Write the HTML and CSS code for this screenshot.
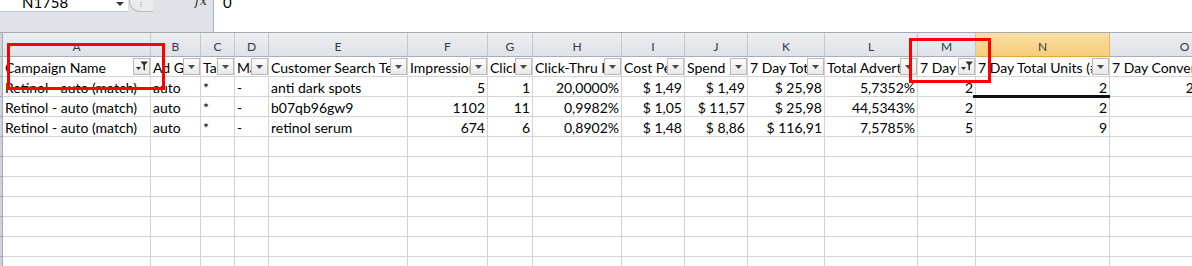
FILE: index.html
```html
<!DOCTYPE html>
<html lang="en">
<head>
  <meta charset="UTF-8" />
  <title>Search Term Report</title>
  <link rel="stylesheet" href="styles.css">
</head>
<body>

  <div id="formula-bar">
    <div class="fb-left">
      <div class="name-box">
        <span class="name-text">N1758</span>
        <span class="name-arrow"></span>
      </div>
      <div class="grip"><span class="dots"></span></div>
      <span class="fx">fx</span>
    </div>
    <div class="fb-input"><span class="fb-value">0</span></div>
  </div>

  <div class="sheet">
    <!-- column letters -->
    <div class="rh"></div>
    <div class="col">A</div><div class="col">B</div><div class="col">C</div><div class="col">D</div>
    <div class="col">E</div><div class="col">F</div><div class="col">G</div><div class="col">H</div>
    <div class="col">I</div><div class="col">J</div><div class="col">K</div><div class="col">L</div>
    <div class="col">M</div><div class="col sel">N</div><div class="col">O</div>

    <!-- row 1: table headers with filter buttons -->
    <div class="rh"></div>
    <div class="head">Campaign Name<span class="filtro activo"><svg viewBox="0 0 15 15"><path d="M2 8h5l-2.5 3z"/><path d="M6.5 2.5h7.5l-3 3.6v5.4l-1.6-1V6.1z"/></svg></span></div>
    <div class="head">Ad Group Name<span class="filtro"><svg viewBox="0 0 15 15"><path d="M4 6h7l-3.5 4z"/></svg></span></div>
    <div class="head">Targeting<span class="filtro"><svg viewBox="0 0 15 15"><path d="M4 6h7l-3.5 4z"/></svg></span></div>
    <div class="head">Match Type<span class="filtro"><svg viewBox="0 0 15 15"><path d="M4 6h7l-3.5 4z"/></svg></span></div>
    <div class="head">Customer Search Term<span class="filtro"><svg viewBox="0 0 15 15"><path d="M4 6h7l-3.5 4z"/></svg></span></div>
    <div class="head">Impressions<span class="filtro"><svg viewBox="0 0 15 15"><path d="M4 6h7l-3.5 4z"/></svg></span></div>
    <div class="head">Clicks<span class="filtro"><svg viewBox="0 0 15 15"><path d="M4 6h7l-3.5 4z"/></svg></span></div>
    <div class="head">Click-Thru Rate (CTR)<span class="filtro"><svg viewBox="0 0 15 15"><path d="M4 6h7l-3.5 4z"/></svg></span></div>
    <div class="head">Cost Per Click (CPC)<span class="filtro"><svg viewBox="0 0 15 15"><path d="M4 6h7l-3.5 4z"/></svg></span></div>
    <div class="head">Spend<span class="filtro"><svg viewBox="0 0 15 15"><path d="M4 6h7l-3.5 4z"/></svg></span></div>
    <div class="head">7 Day Total Sales<span class="filtro"><svg viewBox="0 0 15 15"><path d="M4 6h7l-3.5 4z"/></svg></span></div>
    <div class="head">Total Advertising Cost of Sales (ACoS)<span class="filtro"><svg viewBox="0 0 15 15"><path d="M4 6h7l-3.5 4z"/></svg></span></div>
    <div class="head">7 Day Total Orders (#)<span class="filtro activo"><svg viewBox="0 0 15 15"><path d="M2 8h5l-2.5 3z"/><path d="M6.5 2.5h7.5l-3 3.6v5.4l-1.6-1V6.1z"/></svg></span></div>
    <div class="head">7 Day Total Units (#)<span class="filtro"><svg viewBox="0 0 15 15"><path d="M4 6h7l-3.5 4z"/></svg></span></div>
    <div class="head">7 Day Conversion Rate<span class="filtro"><svg viewBox="0 0 15 15"><path d="M4 6h7l-3.5 4z"/></svg></span></div>

    <!-- data -->
    <div class="rh"></div>
    <div>Retinol - auto (match)</div><div>auto</div><div>*</div><div>-</div><div>anti dark spots</div>
    <div class="num">5</div><div class="num">1</div><div class="num">20,0000%</div><div class="num">$ 1,49</div>
    <div class="num">$ 1,49</div><div class="num">$ 25,98</div><div class="num">5,7352%</div><div class="num">2</div>
    <div class="num">2</div><div class="num">200,0000%</div>

    <div class="rh"></div>
    <div>Retinol - auto (match)</div><div>auto</div><div>*</div><div>-</div><div>b07qb96gw9</div>
    <div class="num">1102</div><div class="num">11</div><div class="num">0,9982%</div><div class="num">$ 1,05</div>
    <div class="num">$ 11,57</div><div class="num">$ 25,98</div><div class="num">44,5343%</div><div class="num">2</div>
    <div class="num">2</div><div class="num">18,1818%</div>

    <div class="rh"></div>
    <div>Retinol - auto (match)</div><div>auto</div><div>*</div><div>-</div><div>retinol serum</div>
    <div class="num">674</div><div class="num">6</div><div class="num">0,8902%</div><div class="num">$ 1,48</div>
    <div class="num">$ 8,86</div><div class="num">$ 116,91</div><div class="num">7,5785%</div><div class="num">5</div>
    <div class="num">9</div><div class="num">83,3333%</div>

    <!-- empty rows -->
    <div class="rh"></div><div></div><div></div><div></div><div></div><div></div><div></div><div></div><div></div><div></div><div></div><div></div><div></div><div></div><div></div><div></div>
    <div class="rh"></div><div></div><div></div><div></div><div></div><div></div><div></div><div></div><div></div><div></div><div></div><div></div><div></div><div></div><div></div><div></div>
    <div class="rh"></div><div></div><div></div><div></div><div></div><div></div><div></div><div></div><div></div><div></div><div></div><div></div><div></div><div></div><div></div><div></div>
    <div class="rh"></div><div></div><div></div><div></div><div></div><div></div><div></div><div></div><div></div><div></div><div></div><div></div><div></div><div></div><div></div><div></div>
    <div class="rh"></div><div></div><div></div><div></div><div></div><div></div><div></div><div></div><div></div><div></div><div></div><div></div><div></div><div></div><div></div><div></div>
    <div class="rh"></div><div></div><div></div><div></div><div></div><div></div><div></div><div></div><div></div><div></div><div></div><div></div><div></div><div></div><div></div><div></div>
    <div class="rh"></div><div></div><div></div><div></div><div></div><div></div><div></div><div></div><div></div><div></div><div></div><div></div><div></div><div></div><div></div><div></div>
  </div>

  <!-- selection edge and red annotation boxes -->
  <div id="sel-line"></div>
  <div class="marca" id="marca-a"></div>
  <div class="marca" id="marca-m"></div>

</body>
</html>
```

FILE: styles.css
```css
* { box-sizing: border-box; margin: 0; padding: 0; }

html, body {
  height: 100%;
}

body {
  position: relative;
  overflow: hidden;
  background: #fff;
  font-family: Lato, 'Liberation Sans', sans-serif;
  font-size: 14px;
  color: #000;
}

/* formula bar */

#formula-bar {
  display: flex;
  height: 33px;
  background: #dfe2e7;
  border-bottom: 1px solid #a3aab4;
}

.fb-left {
  display: flex;
  align-items: flex-start;
  width: 213px;
}

.name-box {
  position: relative;
  width: 128px;
  height: 12px;
  background: #fff;
  border-bottom: 1px solid #c3c8cf;
  overflow: hidden;
}

.name-text {
  display: block;
  margin: -7px 0 0 22px;
  line-height: 18px;
  font-size: 15px;
}

.name-arrow {
  position: absolute;
  top: 2px;
  left: 116px;
  border-left: 4px solid transparent;
  border-right: 4px solid transparent;
  border-top: 4px solid #333;
}

.grip {
  width: 24px;
  height: 12px;
  margin-left: 1px;
  background: #e9ebee;
  border-left: 1px solid #b7bcc4;
  border-bottom: 1px solid #b7bcc4;
  border-bottom-left-radius: 11px;
  position: relative;
}

.dots {
  position: absolute;
  top: 2px;
  left: 10px;
  width: 2px;
  height: 6px;
  background: repeating-linear-gradient(#b9bec5 0 1px, transparent 1px 2px);
}

.fx {
  margin-left: auto;
  margin-right: 6px;
  margin-top: -6px;
  font-family: 'DejaVu Serif', serif;
  font-style: italic;
  font-size: 13px;
  line-height: 14px;
  color: #333;
}

.fb-input {
  flex: 1;
  background: #fff;
  border-left: 1px solid #a9b0b9;
  padding-left: 9px;
  overflow: hidden;
}

.fb-value {
  display: block;
  margin-top: -7px;
  line-height: 18px;
  font-size: 15px;
}

/* sheet grid */

.sheet {
  display: grid;
  grid-template-columns: 3px 148px 50px 34px 34px 139px 80px 45px 89px 63px 63px 77px 93px 58px 134px 150px;
  grid-template-rows: 24px;
  grid-auto-rows: 20px;
  width: 1260px;
}

.sheet > div {
  border-right: 1px solid #d4d4d4;
  border-bottom: 1px solid #d4d4d4;
  padding: 2px 2px 0;
  line-height: 17px;
  white-space: nowrap;
  overflow: hidden;
}

.sheet > .rh {
  padding: 0;
  background: #cfd4dc;
  border-right-color: #a3abb6;
  border-bottom-color: #a3abb6;
}

.sheet > .col {
  padding-top: 7px;
  line-height: 14px;
  font-size: 12px;
  text-align: center;
  color: #2f3b49;
  background: linear-gradient(#eceef1, #dfe2e7);
  border-right-color: #c2c7ce;
  border-bottom-color: #a6aeb9;
}

.sheet > .col.sel {
  background: linear-gradient(#fbe0a3, #f6cd7a);
  border-right-color: #eeb55d;
  border-bottom-color: #e6a33e;
}

.sheet > .num {
  text-align: right;
}

.sheet > .head {
  position: relative;
}

.filtro {
  position: absolute;
  top: 1px;
  right: 0;
  width: 17px;
  height: 17px;
  border: 1px solid #b9b9b9;
  background: linear-gradient(#fdfdfd, #e9e9e9);
}

.filtro svg {
  display: block;
  width: 15px;
  height: 15px;
  fill: #4a4a4a;
}

.filtro.activo svg {
  fill: #2e2e2e;
}

/* overlays */

#sel-line {
  position: absolute;
  top: 95px;
  left: 973px;
  width: 137px;
  height: 3px;
  background: #111;
}

.marca {
  position: absolute;
  border: 3px solid #ff0000;
}

#marca-a {
  top: 43px;
  left: 7px;
  width: 158px;
  height: 47px;
}

#marca-m {
  top: 38px;
  left: 909px;
  width: 82px;
  height: 45px;
}
```
